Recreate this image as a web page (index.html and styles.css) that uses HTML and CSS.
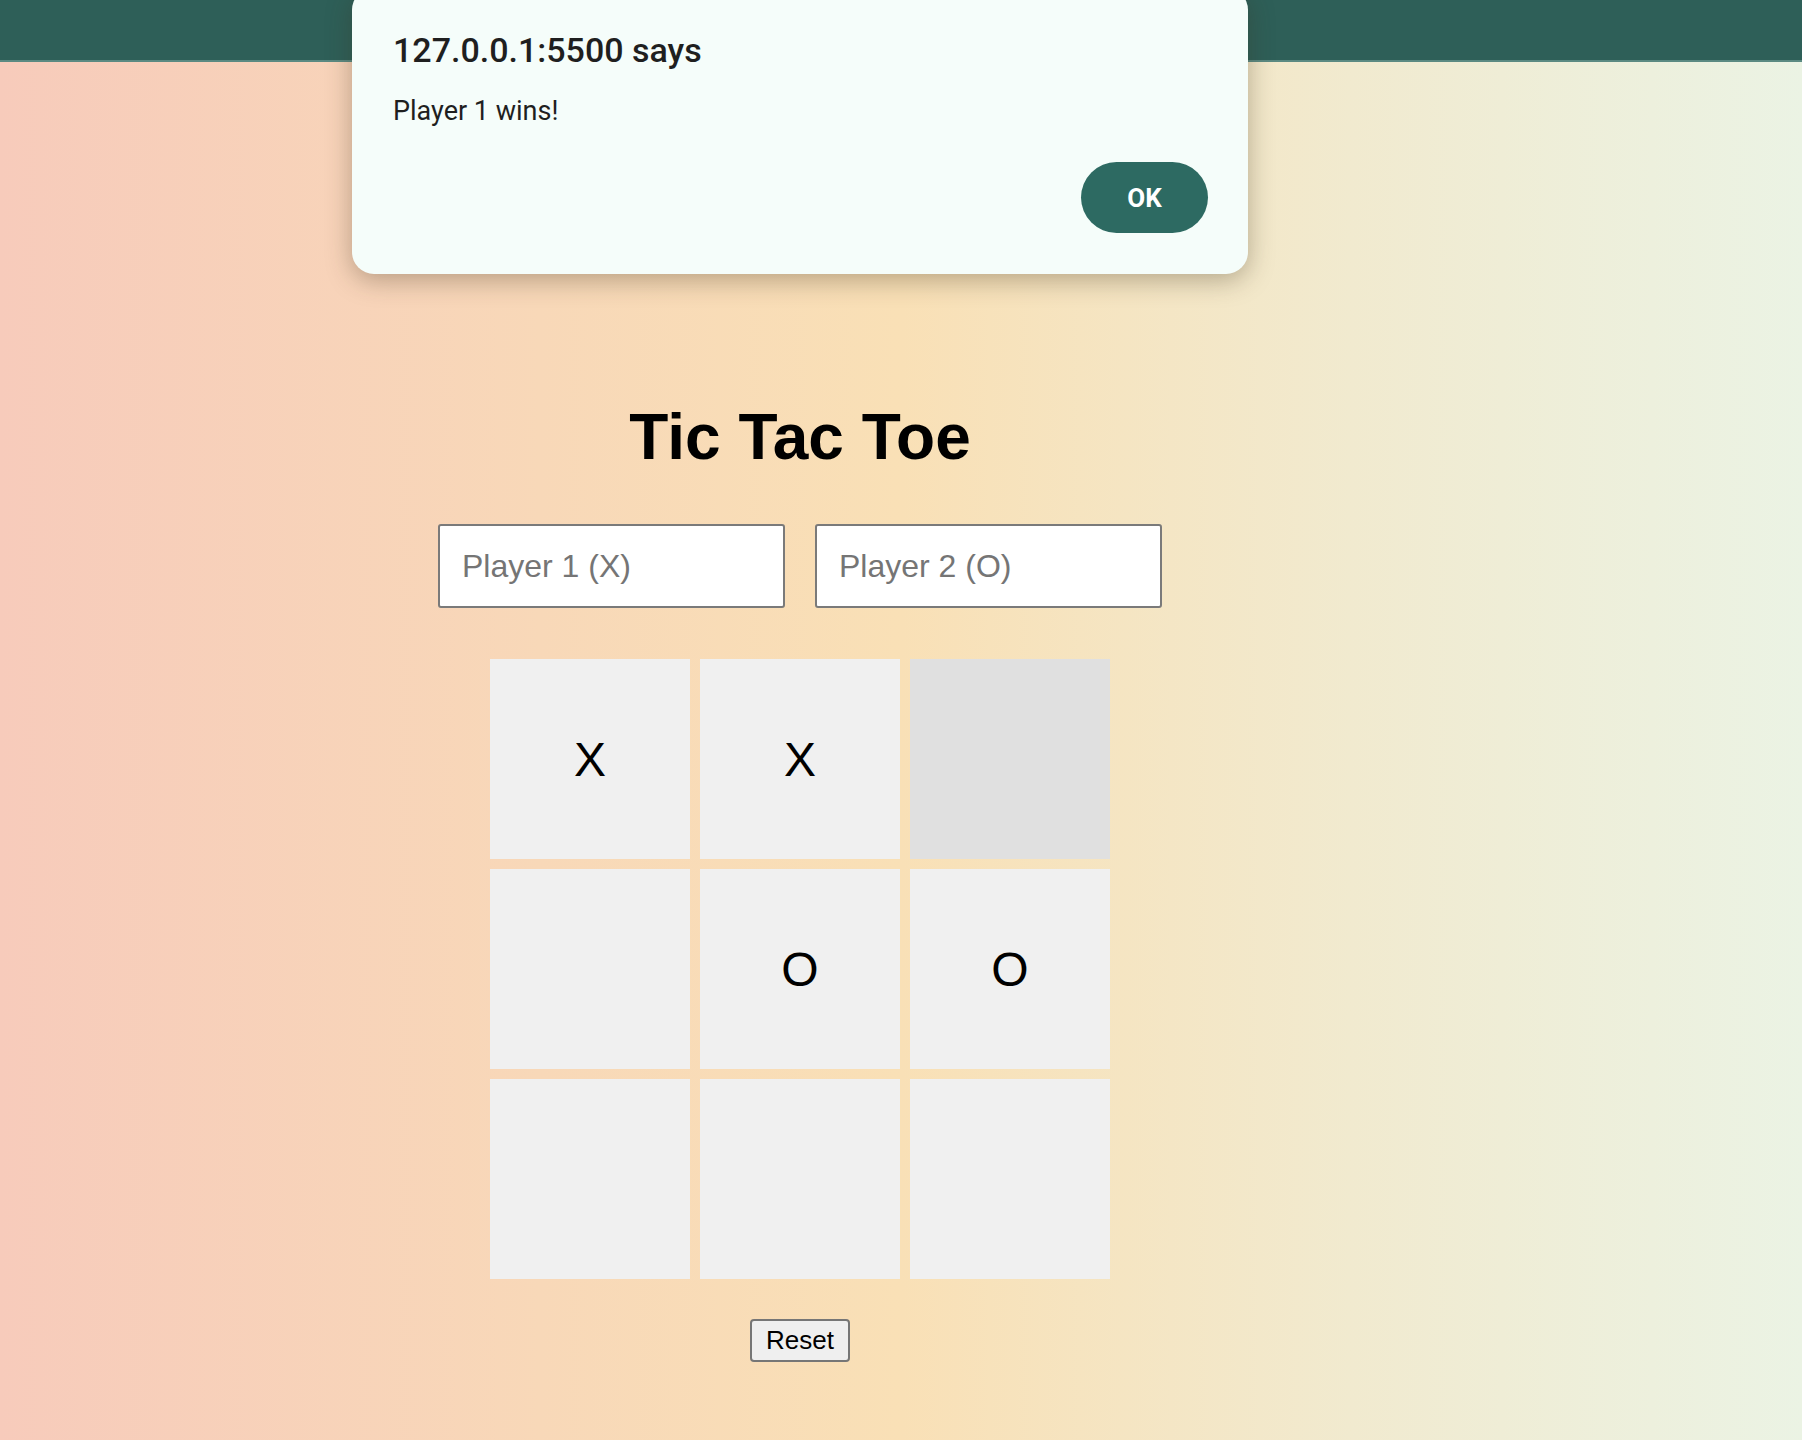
FILE: index.html
```html
<!DOCTYPE html>
<html lang="en">
<head>
<meta charset="utf-8">
<title>Tic Tac Toe</title>
<link rel="stylesheet" href="styles.css">
</head>
<body>
<div class="topbar"></div>
<main class="game">
  <h1 class="title">Tic Tac Toe</h1>
  <div class="players">
    <input class="player-input" type="text" placeholder="Player 1 (X)">
    <input class="player-input" type="text" placeholder="Player 2 (O)">
  </div>
  <div class="board">
    <div class="cell">X</div>
    <div class="cell">X</div>
    <div class="cell cell-hover"></div>
    <div class="cell"></div>
    <div class="cell">O</div>
    <div class="cell">O</div>
    <div class="cell"></div>
    <div class="cell"></div>
    <div class="cell"></div>
  </div>
  <button class="reset" type="button">Reset</button>
</main>
<div class="alert">
  <div class="alert-title">127.0.0.1:5500 says</div>
  <div class="alert-msg">Player 1 wins!</div>
  <div class="alert-actions"><button class="alert-ok" type="button">OK</button></div>
</div>
</body>
</html>
```

FILE: styles.css
```css
html, body {
  margin: 0;
  padding: 0;
}
body {
  min-height: 1440px;
  background: linear-gradient(to right, #f7cbbb 0%, #f8d8b8 30%, #f9e0b6 50%, #f1eacf 75%, #ebf3e4 100%);
  font-family: "Liberation Sans", Arial, sans-serif;
  position: relative;
  overflow: hidden;
}
.topbar {
  height: 60px;
  background: #2e5f58;
  border-bottom: 2px solid #5b8a82;
}
.game {
  width: 1600px;
  padding-top: 340px;
  display: flex;
  flex-direction: column;
  align-items: center;
}
.title {
  margin: 0;
  font-size: 64px;
  font-weight: bold;
  line-height: 71px;
  color: #000;
}
.players {
  margin-top: 51px;
  display: flex;
  gap: 30px;
}
.player-input {
  box-sizing: border-box;
  width: 347px;
  height: 84px;
  border: 2px solid #7a7a7a;
  border-radius: 3px;
  background: #fff;
  padding: 0 22px;
  font-family: "Liberation Sans", Arial, sans-serif;
  font-size: 32px;
  color: #000;
}
.player-input::placeholder {
  color: #757575;
}
.board {
  margin-top: 51px;
  display: grid;
  grid-template-columns: repeat(3, 200px);
  grid-template-rows: repeat(3, 200px);
  gap: 10px;
}
.cell {
  background: #f0f0f0;
  display: flex;
  align-items: center;
  justify-content: center;
  font-size: 48px;
  color: #000;
}
.cell-hover {
  background: #e0e0e0;
}
.reset {
  margin-top: 40px;
  box-sizing: border-box;
  width: 100px;
  height: 43px;
  background: #efefef;
  border: 2px solid #767676;
  border-radius: 4px;
  font-family: "Liberation Sans", Arial, sans-serif;
  font-size: 26px;
  color: #000;
  padding: 0;
}
.alert {
  position: absolute;
  left: 352px;
  top: -12px;
  width: 896px;
  height: 286px;
  box-sizing: border-box;
  background: #f5fdfa;
  border-radius: 22px;
  box-shadow: 0 6px 26px rgba(60, 50, 30, 0.35);
  padding: 42px 40px 0 41px;
  font-family: Roboto, "Noto Sans", sans-serif;
  color: #1f1f1f;
}
.alert-title {
  font-size: 34px;
  font-weight: 500;
  line-height: 40px;
}
.alert-msg {
  margin-top: 25px;
  font-size: 27px;
  line-height: 32px;
}
.alert-actions {
  display: flex;
  justify-content: flex-end;
  margin-top: 35px;
}
.alert-ok {
  width: 127px;
  height: 71px;
  border: none;
  border-radius: 36px;
  background: #2d6a62;
  color: #fff;
  font-family: Roboto, "Noto Sans", sans-serif;
  font-size: 26px;
  font-weight: 700;
  padding: 0;
}
```
